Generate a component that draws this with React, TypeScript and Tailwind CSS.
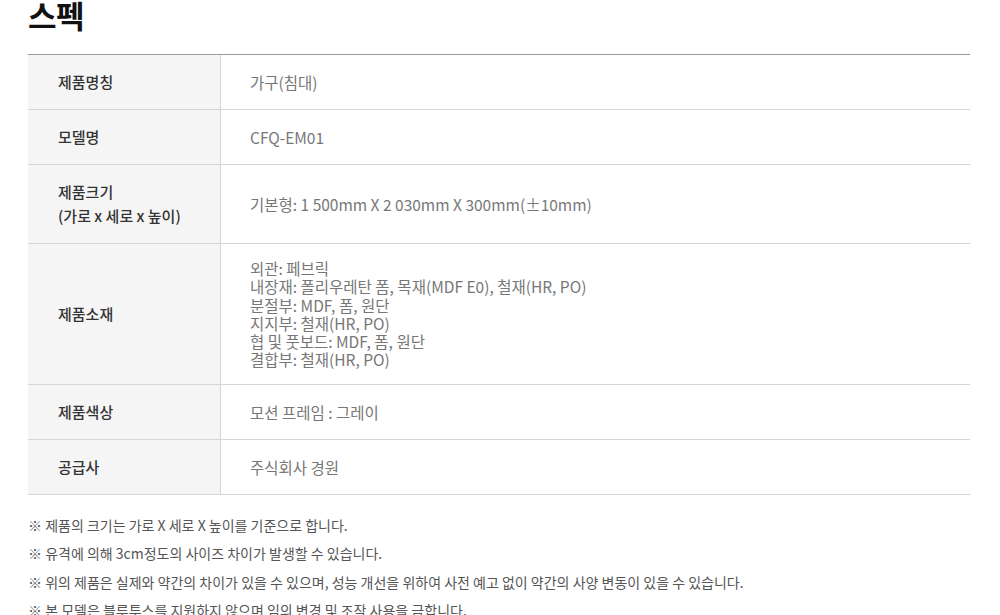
import React from "react";

const font = { fontFamily: '"Noto Sans CJK KR", "Noto Sans", sans-serif' };

type Row = { h: React.ReactNode; v: React.ReactNode };

const rows: Row[] = [
  { h: "제품명칭", v: "가구(침대)" },
  { h: "모델명", v: "CFQ-EM01" },
  {
    h: (
      <>
        제품크기
        <br />
        (가로 x 세로 x 높이)
      </>
    ),
    v: "기본형: 1 500mm X 2 030mm X 300mm(±10mm)",
  },
  {
    h: "제품소재",
    v: (
      <div className="leading-[18.3px]">
        외관: 페브릭
        <br />
        내장재: 폴리우레탄 폼, 목재(MDF E0), 철재(HR, PO)
        <br />
        분절부: MDF, 폼, 원단
        <br />
        지지부: 철재(HR, PO)
        <br />
        협 및 풋보드: MDF, 폼, 원단
        <br />
        결합부: 철재(HR, PO)
      </div>
    ),
  },
  { h: "제품색상", v: "모션 프레임 : 그레이" },
  { h: "공급사", v: "주식회사 경원" },
];

const notes = [
  "※ 제품의 크기는 가로 X 세로 X 높이를 기준으로 합니다.",
  "※ 유격에 의해 3cm정도의 사이즈 차이가 발생할 수 있습니다.",
  "※ 위의 제품은 실제와 약간의 차이가 있을 수 있으며, 성능 개선을 위하여 사전 예고 없이 약간의 사양 변동이 있을 수 있습니다.",
  "※ 본 모델은 블루투스를 지원하지 않으며 임의 변경 및 조작 사용을 금합니다.",
];

export default function App() {
  return (
    <div className="w-[1000px] h-[615px] overflow-hidden bg-white" style={font}>
      <div className="mx-[28px] w-[942px] -mt-[5px]">
        <h2 className="text-[31px] font-bold leading-[40px] text-[#111] tracking-[-0.5px]">스펙</h2>
        <div className="mt-[19px] border-t border-[#999]">
          {rows.map((r, i) => (
            <div key={i} className="flex border-b border-[#d5d5d5]">
              <div className="w-[193px] shrink-0 bg-[#f5f5f5] border-r border-[#d5d5d5] pl-[30px] py-[15px] flex items-center text-[15px] font-medium leading-[24px] text-[#333]">
                <div>{r.h}</div>
              </div>
              <div className="flex-1 pl-[29px] py-[15px] flex items-center text-[15.5px] leading-[24px] text-[#777]">
                <div>{r.v}</div>
              </div>
            </div>
          ))}
        </div>
        <div className="mt-[16px] text-[14px] text-[#555] leading-[28.5px]">
          {notes.map((n, i) => (
            <p key={i}>{n}</p>
          ))}
        </div>
      </div>
    </div>
  );
}
